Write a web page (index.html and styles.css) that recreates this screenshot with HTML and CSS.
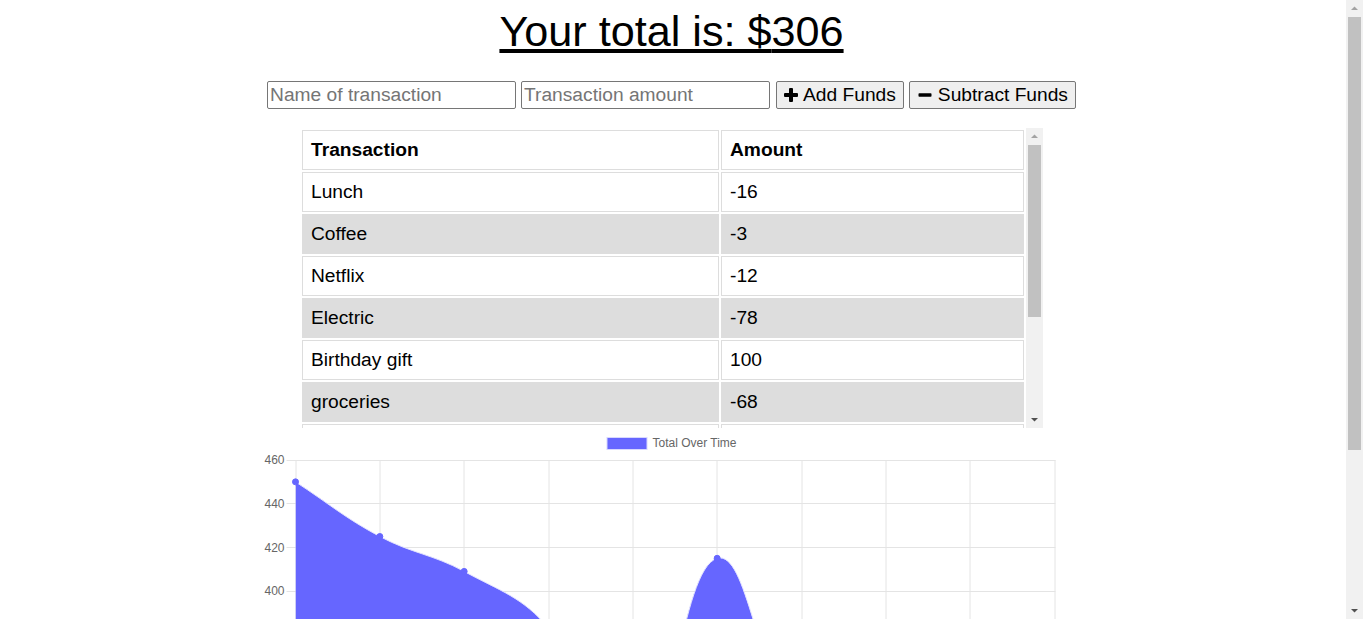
FILE: index.html
```html
<!DOCTYPE html>
<html lang="en">
<head>
<meta charset="utf-8">
<title>Budget Tracker</title>
<link rel="stylesheet" href="styles.css">
</head>
<body>
  <div class="page">
    <h1 class="total">Your total is: $<span class="total-amount">306</span></h1>

    <div class="form">
      <input type="text" class="field" placeholder="Name of transaction">
      <input type="number" class="field" placeholder="Transaction amount">
      <button class="btn btn-add"><svg class="icon" viewBox="0 0 14 14" width="14" height="14"><rect x="5" y="0" width="4" height="14" rx="1"/><rect x="0" y="5" width="14" height="4" rx="1"/></svg>Add Funds</button>
      <button class="btn btn-sub"><svg class="icon" viewBox="0 0 14 14" width="14" height="14"><rect x="0.5" y="5.2" width="13" height="3.6" rx="0.8"/></svg>Subtract Funds</button>
    </div>

    <div class="table-wrap">
      <div class="table-viewport">
        <table class="tx-table">
          <colgroup><col class="col-name"><col class="col-amount"></colgroup>
          <thead>
            <tr><th>Transaction</th><th>Amount</th></tr>
          </thead>
          <tbody>
            <tr><td>Lunch</td><td>-16</td></tr>
            <tr><td>Coffee</td><td>-3</td></tr>
            <tr><td>Netflix</td><td>-12</td></tr>
            <tr><td>Electric</td><td>-78</td></tr>
            <tr><td>Birthday gift</td><td>100</td></tr>
            <tr><td>groceries</td><td>-68</td></tr>
            <tr class="row-partial" aria-hidden="true"><td></td><td></td></tr>
          </tbody>
        </table>
      </div>
      <div class="vscroll vscroll-table">
        <div class="sb-btn"><svg viewBox="0 0 17 17" width="17" height="17"><polygon class="arrow-up" points="5,10 8.5,6.5 12,10"/></svg></div>
        <div class="sb-track"><div class="sb-thumb sb-thumb-table"></div></div>
        <div class="sb-btn"><svg viewBox="0 0 17 17" width="17" height="17"><polygon class="arrow-down" points="5,7 8.5,10.5 12,7"/></svg></div>
      </div>
    </div>

    <div class="chart-wrap">
      <svg class="chart" width="830" height="402" viewBox="256.5 428 830 402">
        <defs>
          <clipPath id="area"><rect x="295" y="458" width="760" height="352"/></clipPath>
        </defs>
        <g class="legend">
          <rect x="606.5" y="437.5" width="40" height="12" class="legend-box"/>
          <text x="652" y="447.3" class="legend-text">Total Over Time</text>
        </g>
        <g class="grid">
          <line x1="286" y1="460.5" x2="1055" y2="460.5"/>
          <line x1="286" y1="503.5" x2="1055" y2="503.5"/>
          <line x1="286" y1="547.5" x2="1055" y2="547.5"/>
          <line x1="286" y1="591.5" x2="1055" y2="591.5"/>
          <line x1="286" y1="634.5" x2="1055" y2="634.5"/>
          <line x1="286" y1="678.5" x2="1055" y2="678.5"/>
          <line x1="286" y1="722.5" x2="1055" y2="722.5"/>
          <line x1="286" y1="765.5" x2="1055" y2="765.5"/>
          <line x1="286" y1="809.5" x2="1055" y2="809.5"/>
          <line x1="295.5" y1="460" x2="295.5" y2="819"/>
          <line x1="379.5" y1="460" x2="379.5" y2="819"/>
          <line x1="463.5" y1="460" x2="463.5" y2="819"/>
          <line x1="548.5" y1="460" x2="548.5" y2="819"/>
          <line x1="632.5" y1="460" x2="632.5" y2="819"/>
          <line x1="716.5" y1="460" x2="716.5" y2="819"/>
          <line x1="801.5" y1="460" x2="801.5" y2="819"/>
          <line x1="885.5" y1="460" x2="885.5" y2="819"/>
          <line x1="969.5" y1="460" x2="969.5" y2="819"/>
          <line x1="1054.5" y1="460" x2="1054.5" y2="819"/>
        </g>
        <g class="ticks">
          <text x="284" y="464.3">460</text>
          <text x="284" y="508">440</text>
          <text x="284" y="551.7">420</text>
          <text x="284" y="595.4">400</text>
          <text x="284" y="639.1">380</text>
          <text x="284" y="682.8">360</text>
          <text x="284" y="726.5">340</text>
          <text x="284" y="770.2">320</text>
          <text x="284" y="813.9">300</text>
        </g>
        <g clip-path="url(#area)">
          <path class="area" d="M295,481.85 C328.73,503.71 343.98,517.73 379.33,536.5 C411.44,553.55 431.76,554.05 463.67,571.4 C499.23,590.73 522.84,597.55 548,628.2 C590.3,679.71 603.88,788.59 632.33,776.8 C671.34,760.63 679.44,568.89 716.67,558.3 C746.91,549.69 754.92,675.06 801,728.8 C822.39,753.74 850.87,748.32 885.33,755 C918.34,761.4 937.22,753.52 969.67,761.5 C1004.69,770.12 1020.27,782.5 1054,796.5 L1054,809.6 L295,809.6 Z"/>
          <path class="line" d="M295,481.85 C328.73,503.71 343.98,517.73 379.33,536.5 C411.44,553.55 431.76,554.05 463.67,571.4 C499.23,590.73 522.84,597.55 548,628.2 C590.3,679.71 603.88,788.59 632.33,776.8 C671.34,760.63 679.44,568.89 716.67,558.3 C746.91,549.69 754.92,675.06 801,728.8 C822.39,753.74 850.87,748.32 885.33,755 C918.34,761.4 937.22,753.52 969.67,761.5 C1004.69,770.12 1020.27,782.5 1054,796.5"/>
        </g>
        <g class="points">
          <circle cx="295" cy="481.85" r="3"/>
          <circle cx="379.33" cy="536.5" r="3"/>
          <circle cx="463.67" cy="571.4" r="3"/>
          <circle cx="548" cy="628.2" r="3"/>
          <circle cx="632.33" cy="776.8" r="3"/>
          <circle cx="716.67" cy="558.3" r="3"/>
          <circle cx="801" cy="728.8" r="3"/>
          <circle cx="885.33" cy="755" r="3"/>
          <circle cx="969.67" cy="761.5" r="3"/>
          <circle cx="1054" cy="796.5" r="3"/>
        </g>
      </svg>
    </div>
  </div>

  <div class="vscroll vscroll-page">
    <div class="sb-btn"><svg viewBox="0 0 17 17" width="17" height="17"><polygon class="arrow-up" points="5,10 8.5,6.5 12,10"/></svg></div>
    <div class="sb-track"><div class="sb-thumb sb-thumb-page"></div></div>
    <div class="sb-btn"><svg viewBox="0 0 17 17" width="17" height="17"><polygon class="arrow-down" points="5,7 8.5,10.5 12,7"/></svg></div>
  </div>
</body>
</html>
```

FILE: styles.css
```css
html, body {
  margin: 0;
  padding: 0;
}

body {
  font-family: "Liberation Sans", Arial, sans-serif;
  color: #000;
  background: #fff;
}

.page {
  width: 1343px;
}

.total {
  margin: 0;
  padding-top: 7px;
  font-size: 43.2px;
  line-height: 49px;
  font-weight: normal;
  text-align: center;
  text-decoration: underline;
}

.form {
  display: flex;
  justify-content: center;
  align-items: center;
  gap: 5px;
  margin-top: 25px;
  height: 28px;
}

.field {
  box-sizing: border-box;
  width: 249px;
  height: 28px;
  margin: 0;
  padding: 2px 2px;
  border: 1px solid #767676;
  border-radius: 2px;
  font-family: "Liberation Sans", Arial, sans-serif;
  font-size: 19.2px;
  color: #000;
  background: #fff;
}

.field::placeholder {
  color: #757575;
}

.field + .field {
  margin-right: 1px;
}

.btn {
  box-sizing: border-box;
  display: inline-flex;
  align-items: center;
  gap: 5px;
  height: 28px;
  margin: 0;
  padding: 0 7px;
  border: 1px solid #767676;
  border-radius: 2px;
  background: #efefef;
  font-family: "Liberation Sans", Arial, sans-serif;
  font-size: 19.2px;
  color: #000;
}

.btn-sub {
  padding-left: 8px;
  gap: 6px;
}

.icon {
  display: block;
  fill: #000;
  flex: none;
}

/* table with its own scrollbar strip */
.table-wrap {
  display: flex;
  width: 743px;
  height: 300px;
  margin: 19px auto 0;
}

.table-viewport {
  width: 726px;
  height: 300px;
  overflow: hidden;
  flex: none;
}

.tx-table {
  width: 726px;
  table-layout: fixed;
  border-collapse: separate;
  border-spacing: 2px;
  font-size: 19.2px;
}

.col-name {
  width: 417px;
}

.tx-table th,
.tx-table td {
  box-sizing: border-box;
  padding: 8px;
  border: 1px solid #dddddd;
  text-align: left;
  line-height: 22px;
}

.tx-table th {
  font-weight: bold;
}

.tx-table tbody tr:nth-child(even) td {
  background: #dddddd;
}

.tx-table .row-partial td {
  height: 40px;
}

/* scrollbars */
.vscroll {
  display: flex;
  flex-direction: column;
  width: 17px;
  background: #f1f1f1;
  flex: none;
}

.vscroll-page {
  position: fixed;
  top: 0;
  right: 0;
  height: 100vh;
}

.vscroll-table {
  height: 300px;
}

.sb-btn {
  height: 17px;
  flex: none;
}

.sb-btn svg {
  display: block;
}

.arrow-up {
  fill: #a3a3a3;
}

.arrow-down {
  fill: #505050;
}

.sb-track {
  flex: 1;
  padding: 0 2px;
}

.sb-thumb {
  background: #c1c1c1;
}

.sb-thumb-page {
  height: 433px;
}

.sb-thumb-table {
  height: 172px;
}

/* chart */
.chart-wrap {
  display: flex;
  justify-content: center;
  height: 402px;
}

.chart {
  display: block;
  flex: none;
}

.grid line {
  stroke: #e4e4e4;
  stroke-width: 1;
}

.ticks text {
  font-family: "Liberation Sans", Arial, sans-serif;
  font-size: 12px;
  fill: #666;
  text-anchor: end;
}

.legend-box {
  fill: #6666ff;
  stroke: #d8d8ff;
  stroke-width: 1;
}

.legend-text {
  font-family: "Liberation Sans", Arial, sans-serif;
  font-size: 12px;
  fill: #666;
}

.area {
  fill: #6666ff;
}

.line {
  fill: none;
  stroke: #e2e2ff;
  stroke-width: 1;
}

.points circle {
  fill: #6666ff;
  stroke: #6666ff;
  stroke-width: 1;
}
```
